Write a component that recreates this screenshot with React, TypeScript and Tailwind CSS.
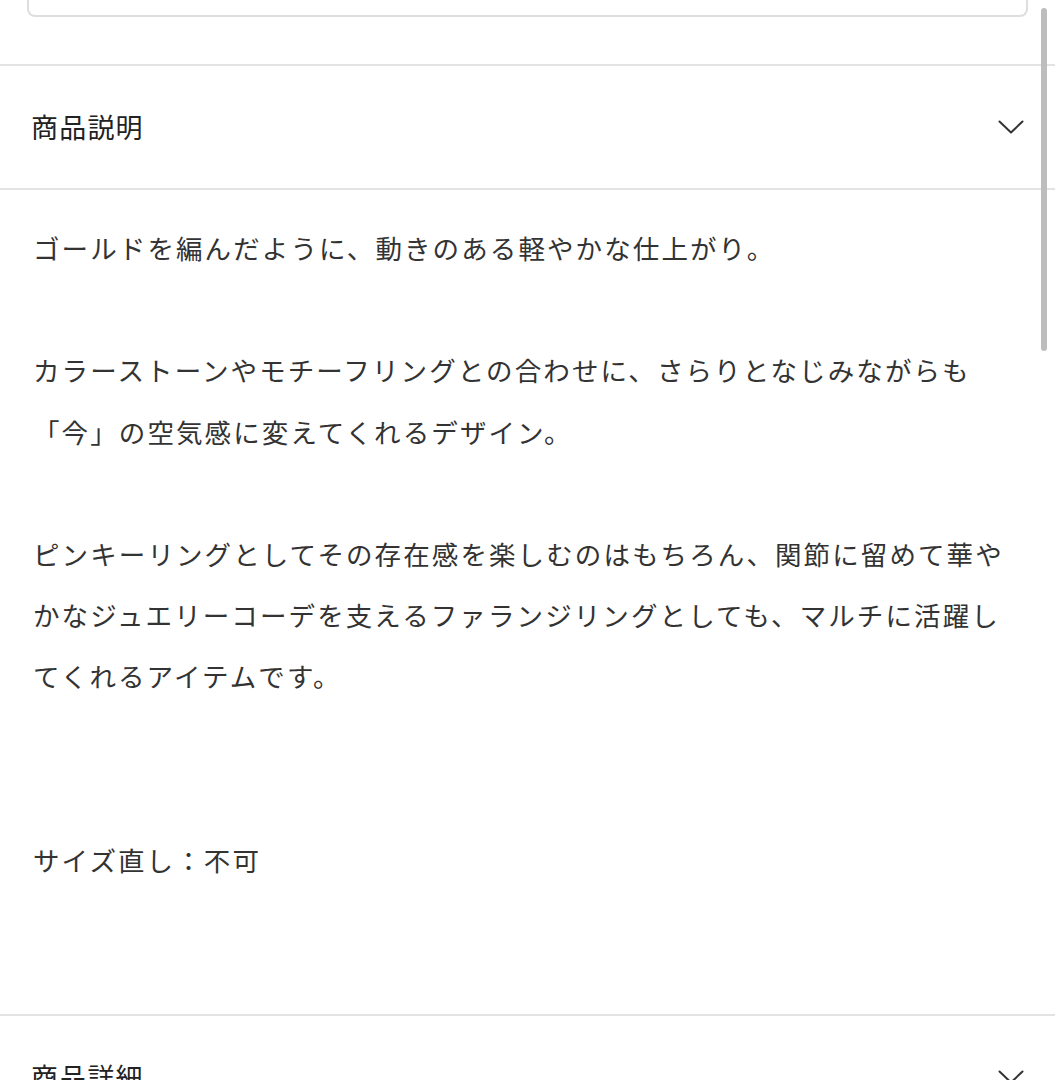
const FONT = '"Noto Sans CJK JP", "Noto Sans", sans-serif';

function Chevron() {
  return (
    <svg width="28" height="16" viewBox="0 0 28 16" fill="none" className="shrink-0">
      <path d="M2.5 2.5 L14 13.5 L25.5 2.5" stroke="#333" strokeWidth="2" strokeLinecap="round" strokeLinejoin="round" />
    </svg>
  );
}

function SectionHeader({ title }: { title: string }) {
  return (
    <div className="flex h-[124px] items-center justify-between border-b-2 border-[#e3e3e3] pl-[31px] pr-[30px]">
      <span className="text-[27px] tracking-[1.2px] text-[#222]">{title}</span>
      <Chevron />
    </div>
  );
}

const lines: (string | null)[] = [
  'ゴールドを編んだように、動きのある軽やかな仕上がり。',
  null,
  'カラーストーンやモチーフリングとの合わせに、さらりとなじみながらも',
  '「今」の空気感に変えてくれるデザイン。',
  null,
  'ピンキーリングとしてその存在感を楽しむのはもちろん、関節に留めて華や',
  'かなジュエリーコーデを支えるファランジリングとしても、マルチに活躍し',
  'てくれるアイテムです。',
  null,
  null,
  'サイズ直し：不可',
];

export default function App() {
  return (
    <div className="relative h-[1080px] w-full overflow-hidden bg-white" style={{ fontFamily: FONT }}>
      {/* bottom of the previous card */}
      <div className="mx-[27px] -mt-[20px] h-[37px] rounded-b-[8px] border-2 border-t-0 border-[#dedede]" />
      <div className="h-[49px] border-b-2 border-[#e3e3e3]" />

      <SectionHeader title="商品説明" />

      <div className="pl-[33px] pr-[20px] pt-[27px] pb-[124px] text-[26.5px] leading-[61.2px] tracking-[2.1px] text-[#333] whitespace-nowrap border-b-2 border-[#e3e3e3]">
        {lines.map((l, i) => (
          <div key={i} className="h-[61.2px]">
            {l ?? '\u00a0'}
          </div>
        ))}
      </div>

      <SectionHeader title="商品詳細" />

      {/* overlay scrollbar */}
      <div className="absolute right-[8px] top-[8px] h-[343px] w-[6px] rounded-full bg-[#bdbdbd]" />
    </div>
  );
}
